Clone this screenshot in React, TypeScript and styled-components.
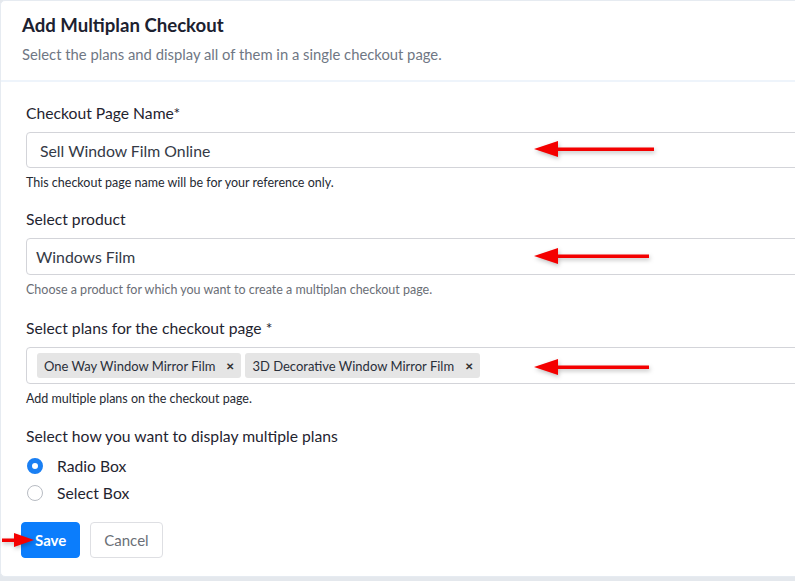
import React from "react";
import styled, { createGlobalStyle } from "styled-components";

const GlobalStyle = createGlobalStyle`
  html, body {
    margin: 0;
    padding: 0;
    background: #e4e8ed;
    overflow: hidden;
  }
  body {
    font-family: Lato, "Open Sans", sans-serif;
    color: #1f2430;
  }
`;

const Page = styled.div`
  width: 795px;
  height: 581px;
  overflow: hidden;
  position: relative;
`;

const Card = styled.div`
  width: 840px;
  height: 577px;
  box-sizing: border-box;
  background: #ffffff;
  border: 1px solid #e6ebf1;
  border-radius: 5px;
  display: flex;
  flex-direction: column;
`;

const Header = styled.div`
  padding: 13px 21px 0;
  height: 66px;
  border-bottom: 2px solid #eef4fb;
`;

const Title = styled.h1`
  margin: 0;
  font-size: 18.6px;
  font-weight: 700;
  color: #1c2130;
  line-height: 22px;
`;

const Subtitle = styled.p`
  margin: 9px 0 0;
  font-size: 14.8px;
  color: #6f7784;
  line-height: 18px;
`;

const Body = styled.div`
  padding: 21px 0 0 25px;
  display: flex;
  flex-direction: column;
`;

const Field = styled.div<{ $gap?: number }>`
  display: flex;
  flex-direction: column;
  margin-bottom: ${(p) => p.$gap ?? 20}px;
`;

const Label = styled.div`
  font-size: 15.7px;
  line-height: 20px;
  color: #1f2430;
  margin-bottom: 9px;
`;

const Input = styled.div<{ $pad?: number; $h?: number }>`
  height: ${(p) => p.$h ?? 37}px;
  box-sizing: border-box;
  width: 800px;
  border: 1px solid #d3d4d9;
  border-radius: 4px;
  display: flex;
  align-items: center;
  padding-left: ${(p) => p.$pad ?? 13}px;
  font-size: 15.8px;
  color: #343a46;
`;

const Help = styled.div<{ $muted?: boolean }>`
  margin-top: 7px;
  font-size: 12.5px;
  line-height: 15px;
  color: ${(p) => (p.$muted ? "#6a6e76" : "#262a33")};
`;

const ChipBox = styled(Input)`
  padding-left: 10px;
  gap: 4px;
`;

const Chip = styled.span`
  display: inline-flex;
  align-items: center;
  height: 25px;
  background: #e5e5e5;
  border-radius: 3px;
  padding: 0 7px 0 7px;
  font-size: 13px;
  color: #2a2f3a;
`;

const ChipClose = styled.span`
  margin-left: 11px;
  font-size: 10px;
  font-weight: 700;
  color: #333;
`;

const RadioRow = styled.label`
  display: flex;
  align-items: center;
  gap: 14px;
  height: 27px;
  font-size: 15.7px;
  color: #1f2430;
  margin-left: 1px;
`;

const RadioDot = styled.span<{ $on?: boolean }>`
  width: 16px;
  height: 16px;
  box-sizing: border-box;
  border-radius: 50%;
  border: ${(p) => (p.$on ? "5px solid #1a7ff3" : "1px solid #b8bcc3")};
  background: #fff;
`;

const OptionLabel = styled(Label)`
  margin-bottom: 6px;
`;

const Actions = styled.div`
  display: flex;
  gap: 10px;
  margin-top: 16px;
  margin-left: -5px;
`;

const Button = styled.button<{ $primary?: boolean }>`
  height: 36px;
  padding: 0 13px;
  border-radius: 4px;
  font-family: inherit;
  font-size: 15px;
  font-weight: ${(p) => (p.$primary ? 700 : 400)};
  border: 1px solid ${(p) => (p.$primary ? "#0b7dfc" : "#dedfe3")};
  background: ${(p) => (p.$primary ? "#0b7dfc" : "#fff")};
  color: ${(p) => (p.$primary ? "#fff" : "#6b6f77")};
`;

const Arrow = styled.svg`
  position: absolute;
  overflow: visible;
  filter: drop-shadow(1px 2px 2px rgba(0, 0, 0, 0.25));
`;

const LeftArrow = ({ x, y, len }: { x: number; y: number; len: number }) => (
  <Arrow style={{ left: x, top: y - 9 }} width={len} height={18}>
    <polygon points="0,9 24,1 24,17" fill="#f40000" />
    <rect x={22} y={7.5} width={len - 22} height={3.5} fill="#f40000" />
  </Arrow>
);

const App: React.FC = () => (
  <Page>
    <GlobalStyle />
    <Card>
      <Header>
        <Title>Add Multiplan Checkout</Title>
        <Subtitle>Select the plans and display all of them in a single checkout page.</Subtitle>
      </Header>
      <Body>
        <Field $gap={19}>
          <Label>Checkout Page Name*</Label>
          <Input $pad={13} $h={36}>Sell Window Film Online</Input>
          <Help>This checkout page name will be for your reference only.</Help>
        </Field>
        <Field $gap={21}>
          <Label>Select product</Label>
          <Input $pad={9}>Windows Film</Input>
          <Help $muted>Choose a product for which you want to create a multiplan checkout page.</Help>
        </Field>
        <Field $gap={20}>
          <Label>Select plans for the checkout page *</Label>
          <ChipBox>
            <Chip>
              One Way Window Mirror Film<ChipClose>✕</ChipClose>
            </Chip>
            <Chip>
              3D Decorative Window Mirror Film<ChipClose>✕</ChipClose>
            </Chip>
          </ChipBox>
          <Help>Add multiple plans on the checkout page.</Help>
        </Field>
        <OptionLabel>Select how you want to display multiple plans</OptionLabel>
        <RadioRow>
          <RadioDot $on />
          Radio Box
        </RadioRow>
        <RadioRow>
          <RadioDot />
          Select Box
        </RadioRow>
        <Actions>
          <Button $primary>Save</Button>
          <Button>Cancel</Button>
        </Actions>
      </Body>
    </Card>
    <LeftArrow x={534} y={149} len={120} />
    <LeftArrow x={534} y={256} len={115} />
    <LeftArrow x={534} y={367} len={115} />
    <Arrow style={{ left: 2, top: 531 }} width={32} height={18}>
      <rect x={0} y={7.5} width={14} height={3.5} fill="#f40000" />
      <polygon points="32,9 12,2 12,16" fill="#f40000" />
    </Arrow>
  </Page>
);

export default App;
